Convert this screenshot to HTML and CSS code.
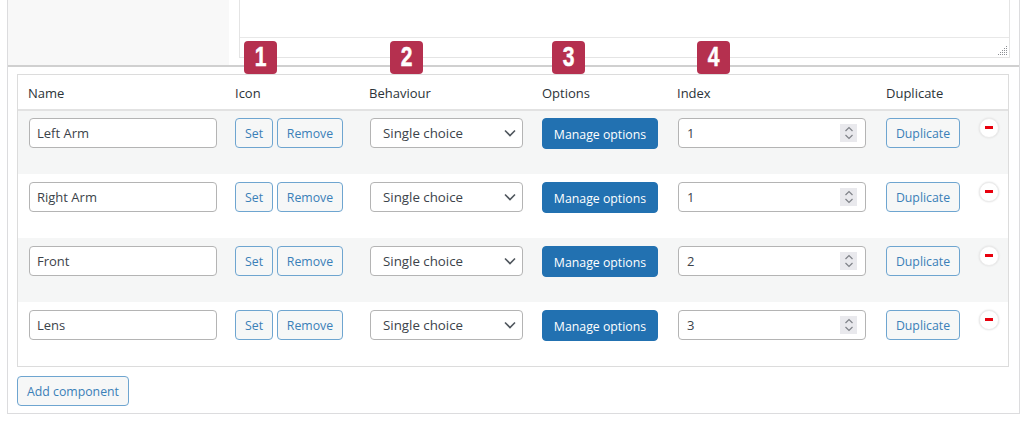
FILE: index.html
```html
<!DOCTYPE html>
<html>

<head>
    <title>Components</title>
    <meta charset="UTF-8">
    <link rel="stylesheet" href="styles.css">
</head>

<body>
    <div class="panel">
        <div class="top-area">
            <div class="sidebar"></div>
            <div class="editor">
                <div class="editor-body"></div>
                <div class="editor-status">
                    <svg class="resize-grip" width="10" height="10" viewBox="0 0 10 10">
                        <path d="M1.500 10V8M3.500 10V6M5.500 10V4M7.500 10V2M9.500 10V0" stroke="#8c8f94" stroke-width="1" stroke-dasharray="1 1" />
                    </svg>
                </div>
            </div>
        </div>

        <div class="components">
            <table class="components-table">
                <thead>
                    <tr>
                        <th class="col-name">Name</th>
                        <th class="col-icon">Icon<span class="badge badge-icon"><span>1</span></span></th>
                        <th class="col-behaviour">Behaviour<span class="badge badge-behaviour"><span>2</span></span></th>
                        <th class="col-options">Options<span class="badge badge-options"><span>3</span></span></th>
                        <th class="col-index">Index<span class="badge badge-index"><span>4</span></span></th>
                        <th class="col-duplicate">Duplicate</th>
                        <th class="col-delete"></th>
                    </tr>
                </thead>
                <tbody>
                    <tr>
                        <td><input class="field" type="text" value="Left Arm"></td>
                        <td><div class="icon-buttons"><button class="btn btn-set">Set</button><button class="btn btn-remove">Remove</button></div></td>
                        <td><select class="field select"><option>Single choice</option></select></td>
                        <td><button class="btn btn-primary">Manage options</button></td>
                        <td>
                            <div class="field number-field">
                                <span>1</span>
                                <span class="spinner"><svg width="10" height="16" viewBox="0 0 10 16"><path d="M1.500 6 5 2.500 8.500 6M1.500 10 5 13.500 8.500 10" fill="none" stroke="#7f8288" stroke-width="1.200" /></svg></span>
                            </div>
                        </td>
                        <td><button class="btn btn-duplicate">Duplicate</button></td>
                        <td><button class="delete"></button></td>
                    </tr>
                    <tr>
                        <td><input class="field" type="text" value="Right Arm"></td>
                        <td><div class="icon-buttons"><button class="btn btn-set">Set</button><button class="btn btn-remove">Remove</button></div></td>
                        <td><select class="field select"><option>Single choice</option></select></td>
                        <td><button class="btn btn-primary">Manage options</button></td>
                        <td>
                            <div class="field number-field">
                                <span>1</span>
                                <span class="spinner"><svg width="10" height="16" viewBox="0 0 10 16"><path d="M1.500 6 5 2.500 8.500 6M1.500 10 5 13.500 8.500 10" fill="none" stroke="#7f8288" stroke-width="1.200" /></svg></span>
                            </div>
                        </td>
                        <td><button class="btn btn-duplicate">Duplicate</button></td>
                        <td><button class="delete"></button></td>
                    </tr>
                    <tr>
                        <td><input class="field" type="text" value="Front"></td>
                        <td><div class="icon-buttons"><button class="btn btn-set">Set</button><button class="btn btn-remove">Remove</button></div></td>
                        <td><select class="field select"><option>Single choice</option></select></td>
                        <td><button class="btn btn-primary">Manage options</button></td>
                        <td>
                            <div class="field number-field">
                                <span>2</span>
                                <span class="spinner"><svg width="10" height="16" viewBox="0 0 10 16"><path d="M1.500 6 5 2.500 8.500 6M1.500 10 5 13.500 8.500 10" fill="none" stroke="#7f8288" stroke-width="1.200" /></svg></span>
                            </div>
                        </td>
                        <td><button class="btn btn-duplicate">Duplicate</button></td>
                        <td><button class="delete"></button></td>
                    </tr>
                    <tr>
                        <td><input class="field" type="text" value="Lens"></td>
                        <td><div class="icon-buttons"><button class="btn btn-set">Set</button><button class="btn btn-remove">Remove</button></div></td>
                        <td><select class="field select"><option>Single choice</option></select></td>
                        <td><button class="btn btn-primary">Manage options</button></td>
                        <td>
                            <div class="field number-field">
                                <span>3</span>
                                <span class="spinner"><svg width="10" height="16" viewBox="0 0 10 16"><path d="M1.500 6 5 2.500 8.500 6M1.500 10 5 13.500 8.500 10" fill="none" stroke="#7f8288" stroke-width="1.200" /></svg></span>
                            </div>
                        </td>
                        <td><button class="btn btn-duplicate">Duplicate</button></td>
                        <td><button class="delete"></button></td>
                    </tr>
                </tbody>
            </table>

            <button class="btn add-component">Add component</button>
        </div>
    </div>
</body>

</html>
```

FILE: styles.css
```css
body {
    margin: 0;
    background-color: #fff;
    font-family: "Open Sans", Arial, sans-serif;
    font-size: 13px;
    color: #2c3338;
}

.panel {
    box-sizing: border-box;
    width: 1013px;
    height: 414px;
    margin-left: 7px;
    border: 1px solid #dcdcde;
    border-top: none;
}

.top-area {
    display: flex;
    height: 65px;
    border-bottom: 2px solid #d0d0d0;
}

.sidebar {
    width: 221px;
    background-color: #f8f8f8;
}

.editor {
    display: flex;
    flex-direction: column;
    box-sizing: border-box;
    width: 771px;
    height: 58px;
    margin-left: 10px;
    border: 1px solid #e4e4e4;
    border-top: none;
}

.editor-body {
    flex: 1;
}

.editor-status {
    display: flex;
    justify-content: flex-end;
    align-items: flex-end;
    height: 20px;
    padding: 0 2px 2px 0;
    box-sizing: border-box;
    border-top: 1px solid #e8e8e8;
}

.components {
    padding: 7px 9px 0;
}

.components-table {
    width: 992px;
    table-layout: fixed;
    border-collapse: separate;
    border-spacing: 0;
    border: 1px solid #dcdcdc;
}

.components-table th {
    position: relative;
    height: 36px;
    padding: 2px 10px 0;
    box-sizing: border-box;
    border-bottom: 2px solid #e2e2e2;
    text-align: left;
    font-weight: normal;
    color: #2c3338;
}

.components-table td {
    height: 64px;
    padding: 8px 10px;
    box-sizing: border-box;
    vertical-align: top;
}

.components-table tbody tr:first-child td {
    height: 63px;
    padding-top: 7px;
}

.components-table tbody tr:nth-child(odd) {
    background-color: #f5f6f6;
}

.col-name { width: 207px; }
.col-icon { width: 134px; }
.col-behaviour { width: 173px; }
.col-options { width: 135px; }
.col-index { width: 209px; }
.col-duplicate { width: 94px; }

.badge {
    position: absolute;
    top: -34px;
    width: 33px;
    height: 33px;
    border-radius: 4px;
    background-color: #b5304f;
    color: #fff;
    font-family: "Liberation Sans", Arial, sans-serif;
    font-size: 27px;
    font-weight: bold;
    line-height: 33px;
    text-align: center;
    -webkit-text-stroke: 0.5px #fff;
}

.badge span {
    display: inline-block;
    transform: scaleX(0.78);
}

.badge-icon { left: 19px; }
.badge-behaviour { left: 31px; }
.badge-options { left: 20px; }
.badge-index { left: 30px; }

.field {
    box-sizing: border-box;
    height: 30px;
    margin: 0 0 0 1px;
    border: 1px solid #b4b4b4;
    border-radius: 4px;
    background-color: #fff;
    color: #3c434a;
    font-family: inherit;
    font-size: 13px;
}

input.field {
    width: 188px;
    padding: 0 7px;
}

.select {
    width: 153px;
    padding: 0 24px 0 12px;
    font-size: 13.300px;
    appearance: none;
    background-image: url("data:image/svg+xml,%3Csvg xmlns='http://www.w3.org/2000/svg' width='12' height='8' viewBox='0 0 12 8'%3E%3Cpath d='M1 1.500 6 6.500 11 1.500' fill='none' stroke='%2350575e' stroke-width='1.600'/%3E%3C/svg%3E");
    background-repeat: no-repeat;
    background-position: right 6px center;
}

.number-field {
    display: flex;
    justify-content: space-between;
    align-items: center;
    width: 188px;
    padding: 0 8px;
}

.spinner {
    display: flex;
    justify-content: center;
    align-items: center;
    width: 17px;
    height: 18px;
    background-color: #e9e9ed;
}

.btn {
    box-sizing: border-box;
    height: 30px;
    padding: 1px 0 0;
    border: 1px solid #6ea5d0;
    border-radius: 4px;
    background-color: #f6f7f7;
    color: #3a80b8;
    font-family: inherit;
    font-size: 12.300px;
}

.btn-primary {
    width: 116px;
    height: 31px;
    border-color: #2271b1;
    background-color: #2271b1;
    color: #fff;
}

.icon-buttons {
    display: flex;
    gap: 4px;
}

.btn-set { width: 38px; }
.btn-remove { width: 66px; }
.btn-duplicate { width: 74px; }

.delete {
    display: block;
    position: relative;
    width: 20px;
    height: 20px;
    margin: 0 0 0 -1px;
    padding: 0;
    border: 1px solid #ececec;
    border-radius: 50%;
    background-color: #fff;
    box-shadow: 0 0 2px #d8d8d8;
}

.delete::after {
    content: "";
    position: absolute;
    top: 7px;
    left: 5px;
    width: 8px;
    height: 3px;
    background-color: #e8000d;
}

.add-component {
    display: block;
    width: 112px;
    margin-top: 9px;
}
```
